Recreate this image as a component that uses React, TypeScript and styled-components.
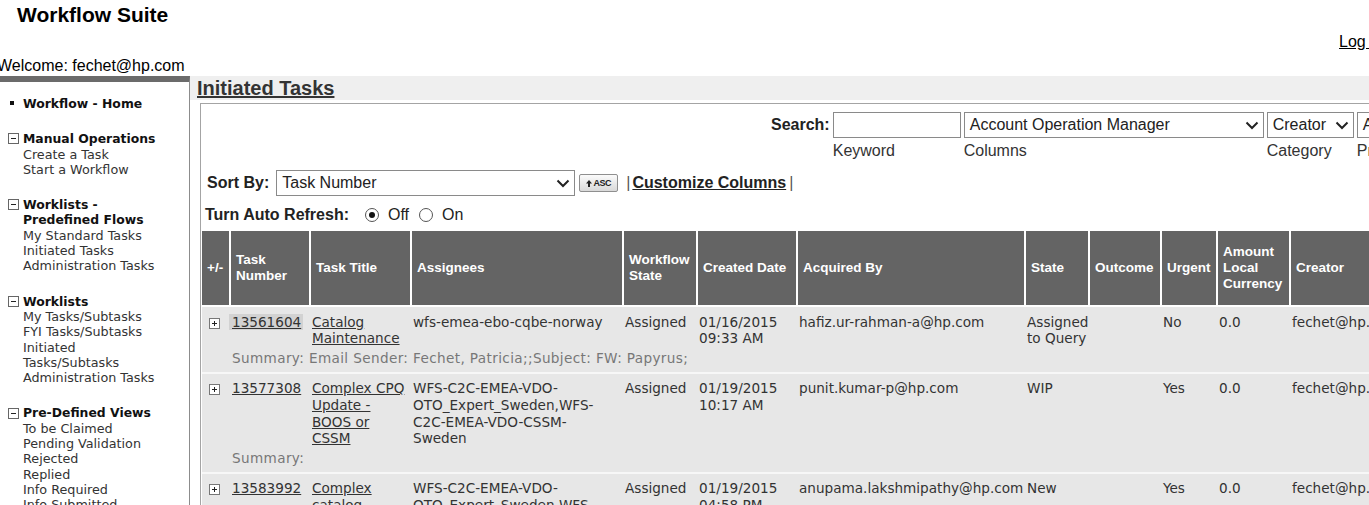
import React from "react";
import styled, { createGlobalStyle } from "styled-components";

const Global = createGlobalStyle`
  html, body { margin: 0; padding: 0; overflow: hidden; background: #fff; }
  body { font-family: "Liberation Sans", Arial, sans-serif; color: #000; }
  * { box-sizing: border-box; }
`;

const Page = styled.div`
  width: 1420px;
`;

/* ---------- header ---------- */
const TopBar = styled.header`
  display: flex;
  flex-direction: column;
  padding-top: 3px;
`;
const AppTitle = styled.h1`
  margin: 0;
  padding-left: 17px;
  font-size: 21px;
  line-height: 24px;
  font-weight: bold;
`;
const LogRow = styled.div`
  display: flex;
  justify-content: flex-end;
  margin-top: 6px;
  padding-right: 24px;
  font-size: 16px;
  line-height: 18px;
`;
const LogLink = styled.a`
  color: #000;
  text-decoration: underline;
`;
const Welcome = styled.div`
  margin: 6px 0 0 -3px;
  font-size: 16px;
  line-height: 18px;
`;

/* ---------- body ---------- */
const Body = styled.div`
  display: flex;
  align-items: stretch;
  margin-top: 1px;
  min-height: 600px;
`;

const Sidebar = styled.nav`
  width: 190px;
  flex: none;
  border-top: 6px solid #6b6b6b;
  border-right: 1px solid #8c8c8c;
  padding: 14px 0 0 8px;
  font-family: "DejaVu Sans", Verdana, sans-serif;
  font-size: 12.4px;
  line-height: 15.3px;
  color: #333;
`;
const NavGroup = styled.div<{ $first?: boolean }>`
  display: grid;
  grid-template-columns: 15px 1fr;
  margin-top: ${(p) => (p.$first ? "0" : "20px")};
`;
const NavIcon = styled.div`
  display: flex;
  align-items: center;
  height: 15.3px;
`;
const Bullet = styled.span`
  display: block;
  width: 4px;
  height: 4px;
  margin: -2px 0 0 2px;
  background: #111;
`;
const NavTitle = styled.div`
  font-weight: bold;
  color: #111;
`;
const NavItem = styled.div`
  color: #333;
  font-size: 12.75px;
`;

const Main = styled.main`
  flex: 1;
  min-width: 0;
`;
const TitleBand = styled.div`
  height: 24px;
  padding-left: 7px;
  background: #efefef;
`;
const PageTitle = styled.h2`
  margin: 0;
  font-size: 20px;
  line-height: 24px;
  font-weight: bold;
  color: #333;
  text-decoration: underline;
`;
const Panel = styled.section`
  margin: 3px 0 0 10px;
  border-top: 1px solid #a4a4a4;
  border-left: 1px solid #a4a4a4;
  background: #fff;
  padding-top: 8px;
`;

/* ---------- search ---------- */
const SearchGrid = styled.div`
  display: grid;
  grid-template-columns: auto 128px 300px 87px 130px;
  column-gap: 3px;
  row-gap: 4px;
  margin-left: 570px;
  font-size: 16px;
`;
const BoldLabel = styled.span`
  font-weight: bold;
  font-size: 16px;
  color: #222;
  display: flex;
  align-items: center;
`;
const TextInput = styled.div`
  height: 26px;
  border: 1px solid #8a8a8a;
  background: #fff;
`;
const FieldCaption = styled.div`
  line-height: 18px;
  color: #333;
  white-space: nowrap;
`;
const SelectBox = styled.div<{ $w?: number }>`
  display: flex;
  align-items: center;
  justify-content: space-between;
  height: 26px;
  ${(p) => (p.$w ? `width: ${p.$w}px;` : "")}
  border: 1px solid #8a8a8a;
  background: #fff;
  padding: 0 4px 0 5px;
  font-size: 16px;
  color: #222;
  white-space: nowrap;
  overflow: hidden;
`;

const Chevron = () => (
  <svg width="14" height="9" viewBox="0 0 14 9" style={{ flex: "none" }}>
    <path d="M1.5 1.5 L7 7 L12.5 1.5" fill="none" stroke="#222" strokeWidth="2" />
  </svg>
);

/* ---------- sort / refresh ---------- */
const ToolRow = styled.div<{ $mt: number; $pl: number }>`
  display: flex;
  align-items: center;
  margin-top: ${(p) => p.$mt}px;
  padding-left: ${(p) => p.$pl}px;
  font-size: 16px;
  line-height: 18px;
`;
const SortSelectWrap = styled.div`
  margin-left: 7px;
`;
const AscButton = styled.button`
  display: inline-flex;
  align-items: center;
  justify-content: center;
  gap: 1px;
  width: 39px;
  height: 18px;
  padding: 0;
  margin-left: 4px;
  border: 1px solid #8f8f8f;
  border-radius: 2px;
  background: linear-gradient(#fbfbfb, #d9d9d9);
  font: bold 9px "Liberation Sans", Arial, sans-serif;
  color: #222;
  letter-spacing: -0.5px;
`;
const Pipe = styled.span<{ $ml: number }>`
  color: #555;
  margin-left: ${(p) => p.$ml}px;
`;
const ToolLink = styled.a`
  margin-left: 2px;
  font-weight: bold;
  color: #222;
  text-decoration: underline;
`;
const Radio = styled.span<{ $checked?: boolean; $ml: number }>`
  position: relative;
  display: inline-block;
  width: 14px;
  height: 14px;
  margin-left: ${(p) => p.$ml}px;
  border: 1px solid #555;
  border-radius: 50%;
  background: #fff;
  &::after {
    content: "";
    display: ${(p) => (p.$checked ? "block" : "none")};
    position: absolute;
    left: 3px;
    top: 3px;
    width: 6px;
    height: 6px;
    border-radius: 50%;
    background: #111;
  }
`;
const RadioLabel = styled.span`
  margin-left: 9px;
  color: #222;
`;

/* ---------- table ---------- */
const Table = styled.table`
  margin: 7px 0 0 1px;
  border-collapse: separate;
  border-spacing: 0;
  table-layout: fixed;
  width: 1219px;
`;
const Th = styled.th<{ $w: number }>`
  width: ${(p) => p.$w}px;
  height: 76px;
  padding: 0 2px 0 5px;
  background: #646464;
  color: #fff;
  font: bold 13.5px/16px "Liberation Sans", Arial, sans-serif;
  text-align: left;
  vertical-align: middle;
  border-right: 2px solid #fff;
  border-bottom: 2px solid #fff;
`;
const Td = styled.td<{ $pr?: number }>`
  padding: 6.5px ${(p) => p.$pr ?? 2}px 0 1px;
  background: #e7e7e7;
  vertical-align: top;
  font-family: "DejaVu Sans", Verdana, sans-serif;
  font-size: 13.6px;
  line-height: 16.7px;
  color: #333;
  white-space: normal;
`;
const SummaryTd = styled(Td)`
  padding: 3px 1px 5px 1px;
  border-bottom: 2px solid #f7f7f7;
  color: #777;
  white-space: nowrap;
  letter-spacing: 0.37px;
`;
const ExpandCell = styled(Td)`
  padding-left: 7px;
`;
const ExpandIcon = styled.svg`
  display: block;
  margin-top: 4px;
`;
const CellLink = styled.a<{ $focused?: boolean }>`
  color: #333;
  text-decoration: underline;
  ${(p) =>
    p.$focused
      ? `background: #d2d2d2; margin-left: -3px; padding: 0 2px 0 3px; display: inline-block;`
      : ""}
`;

const columns = [
  { label: "+/-", w: 29 },
  { label: "Task Number", w: 80 },
  { label: "Task Title", w: 101 },
  { label: "Assignees", w: 212 },
  { label: "Workflow State", w: 74 },
  { label: "Created Date", w: 100 },
  { label: "Acquired By", w: 228 },
  { label: "State", w: 64 },
  { label: "Outcome", w: 72 },
  { label: "Urgent", w: 56 },
  { label: "Amount Local Currency", w: 73 },
  { label: "Creator", w: 130 },
];

const rows = [
  {
    id: "13561604",
    title: "Catalog Maintenance",
    assignees: "wfs-emea-ebo-cqbe-norway",
    wf: "Assigned",
    date: "01/16/2015 09:33 AM",
    acq: "hafiz.ur-rahman-a@hp.com",
    state: "Assigned to Query",
    outcome: "",
    urgent: "No",
    amount: "0.0",
    creator: "fechet@hp.com",
    summary: "Email Sender: Fechet, Patricia;;Subject: FW: Papyrus;",
    focused: true,
  },
  {
    id: "13577308",
    title: "Complex CPQ Update - BOOS or CSSM",
    assignees: "WFS-C2C-EMEA-VDO-OTO_Expert_Sweden,WFS-C2C-EMEA-VDO-CSSM-Sweden",
    wf: "Assigned",
    date: "01/19/2015 10:17 AM",
    acq: "punit.kumar-p@hp.com",
    state: "WIP",
    outcome: "",
    urgent: "Yes",
    amount: "0.0",
    creator: "fechet@hp.com",
    summary: "",
    focused: false,
  },
  {
    id: "13583992",
    title: "Complex catalog update",
    assignees: "WFS-C2C-EMEA-VDO-OTO_Expert_Sweden,WFS-C2C-EMEA-VDO-CSSM-Sweden",
    wf: "Assigned",
    date: "01/19/2015 04:58 PM",
    acq: "anupama.lakshmipathy@hp.com",
    state: "New",
    outcome: "",
    urgent: "Yes",
    amount: "0.0",
    creator: "fechet@hp.com",
    summary: "",
    focused: false,
  },
];

const MinusBox = () => (
  <svg width="11" height="11" viewBox="0 0 11 11">
    <rect x="0.5" y="0.5" width="10" height="10" fill="#fff" stroke="#666" />
    <path d="M3 5.5 H8" stroke="#222" strokeWidth="1" />
  </svg>
);

const navGroups = [
  { title: ["Manual Operations"], items: ["Create a Task", "Start a Workflow"] },
  {
    title: ["Worklists -", "Predefined Flows"],
    items: ["My Standard Tasks", "Initiated Tasks", "Administration Tasks"],
  },
  {
    title: ["Worklists"],
    items: ["My Tasks/Subtasks", "FYI Tasks/Subtasks", "Initiated", "Tasks/Subtasks", "Administration Tasks"],
  },
  {
    title: ["Pre-Defined Views"],
    items: ["To be Claimed", "Pending Validation", "Rejected", "Replied", "Info Required", "Info Submitted", "Closed"],
  },
];

export default function App() {
  return (
    <Page>
      <Global />
      <TopBar>
        <AppTitle>Workflow Suite</AppTitle>
        <LogRow>
          <LogLink href="#">Log Out</LogLink>
        </LogRow>
        <Welcome>Welcome: fechet@hp.com</Welcome>
      </TopBar>
      <Body>
        <Sidebar>
          <NavGroup $first>
            <NavIcon>
              <Bullet />
            </NavIcon>
            <NavTitle>Workflow - Home</NavTitle>
          </NavGroup>
          {navGroups.map((g) => (
            <NavGroup key={g.title.join(" ")}>
              <NavIcon>
                <MinusBox />
              </NavIcon>
              <div>
                {g.title.map((t) => (
                  <NavTitle key={t}>{t}</NavTitle>
                ))}
                {g.items.map((it, i) => (
                  <NavItem key={i}>{it}</NavItem>
                ))}
              </div>
            </NavGroup>
          ))}
        </Sidebar>
        <Main>
          <TitleBand>
            <PageTitle>Initiated Tasks</PageTitle>
          </TitleBand>
          <Panel>
            <SearchGrid>
              <BoldLabel>Search:</BoldLabel>
              <TextInput />
              <SelectBox>
                <span>Account Operation Manager</span>
                <Chevron />
              </SelectBox>
              <SelectBox>
                <span>Creator</span>
                <Chevron />
              </SelectBox>
              <SelectBox>
                <span>All</span>
                <Chevron />
              </SelectBox>
              <span />
              <FieldCaption>Keyword</FieldCaption>
              <FieldCaption>Columns</FieldCaption>
              <FieldCaption>Category</FieldCaption>
              <FieldCaption>Process</FieldCaption>
            </SearchGrid>

            <ToolRow $mt={10} $pl={6}>
              <BoldLabel>Sort By:</BoldLabel>
              <SortSelectWrap>
                <SelectBox $w={299}>
                  <span>Task Number</span>
                  <Chevron />
                </SelectBox>
              </SortSelectWrap>
              <AscButton type="button">
                <svg width="6" height="7" viewBox="0 0 6 7">
                  <path d="M3 0 L6 3.5 H4 V7 H2 V3.5 H0 Z" fill="#222" />
                </svg>
                ASC
              </AscButton>
              <Pipe $ml={8}>|</Pipe>
              <ToolLink href="#">Customize Columns</ToolLink>
              <Pipe $ml={3}>|</Pipe>
            </ToolRow>

            <ToolRow $mt={10} $pl={4}>
              <BoldLabel>Turn Auto Refresh:</BoldLabel>
              <Radio $checked $ml={16} />
              <RadioLabel>Off</RadioLabel>
              <Radio $ml={10} />
              <RadioLabel>On</RadioLabel>
            </ToolRow>

            <Table>
              <thead>
                <tr>
                  {columns.map((c) => (
                    <Th key={c.label} $w={c.w}>
                      {c.label}
                    </Th>
                  ))}
                </tr>
              </thead>
              <tbody>
                {rows.map((r) => (
                  <React.Fragment key={r.id}>
                    <tr>
                      <ExpandCell>
                        <ExpandIcon width="11" height="11" viewBox="0 0 11 11">
                          <rect x="0.5" y="0.5" width="10" height="10" fill="#fff" stroke="#777" />
                          <path d="M3 5.5 H8 M5.5 3 V8" stroke="#222" strokeWidth="1" />
                        </ExpandIcon>
                      </ExpandCell>
                      <Td>
                        <CellLink href="#" $focused={r.focused}>
                          {r.id}
                        </CellLink>
                      </Td>
                      <Td>
                        <CellLink href="#">{r.title}</CellLink>
                      </Td>
                      <Td $pr={10}>{r.assignees}</Td>
                      <Td>{r.wf}</Td>
                      <Td>{r.date}</Td>
                      <Td>{r.acq}</Td>
                      <Td>{r.state}</Td>
                      <Td>{r.outcome}</Td>
                      <Td>{r.urgent}</Td>
                      <Td>{r.amount}</Td>
                      <Td>{r.creator}</Td>
                    </tr>
                    <tr>
                      <SummaryTd />
                      <SummaryTd colSpan={11}>Summary: {r.summary}</SummaryTd>
                    </tr>
                  </React.Fragment>
                ))}
              </tbody>
            </Table>
          </Panel>
        </Main>
      </Body>
    </Page>
  );
}
